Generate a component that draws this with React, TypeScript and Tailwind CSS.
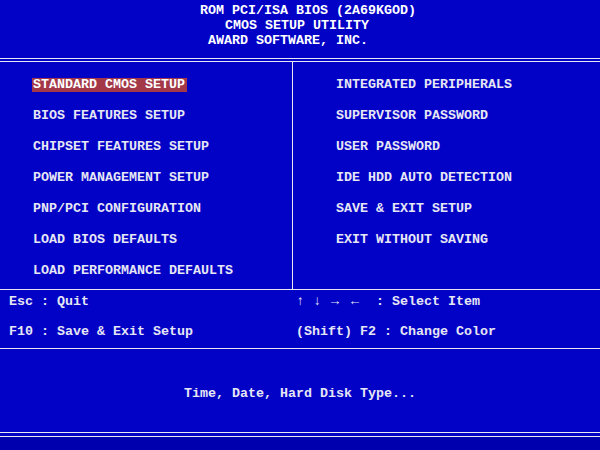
const leftItems = [
  "STANDARD CMOS SETUP",
  "BIOS FEATURES SETUP",
  "CHIPSET FEATURES SETUP",
  "POWER MANAGEMENT SETUP",
  "PNP/PCI CONFIGURATION",
  "LOAD BIOS DEFAULTS",
  "LOAD PERFORMANCE DEFAULTS",
];

const rightItems = [
  "INTEGRATED PERIPHERALS",
  "SUPERVISOR PASSWORD",
  "USER PASSWORD",
  "IDE HDD AUTO DETECTION",
  "SAVE & EXIT SETUP",
  "EXIT WITHOUT SAVING",
];

export default function App() {
  const selected = 0;

  return (
    <div
      className="flex h-[450px] w-[600px] flex-col overflow-hidden bg-[#0202c6] text-[13.33px] font-bold text-[#e6e6f4] whitespace-pre"
      style={{ fontFamily: '"Liberation Mono", "DejaVu Sans Mono", monospace' }}
    >
      {/* header */}
      <div className="flex h-[58px] flex-col pt-[3px] leading-[15px]">
        <div className="pl-[200px] text-white">ROM PCI/ISA BIOS (2A69KGOD)</div>
        <div className="pl-[225px] text-white">CMOS SETUP UTILITY</div>
        <div className="pl-[208px] text-white">AWARD SOFTWARE, INC.</div>
      </div>
      <div className="h-[4px] border-y border-[#e8e8f4]" />

      {/* main menu */}
      <div className="flex h-[228px] border-b border-[#e8e8f4]">
        <div className="w-[293px] border-r border-[#e8e8f4] pt-[7px]">
          {leftItems.map((item, i) => (
            <div key={item} className="flex h-[31px] items-center pl-[32px]">
              <span
                className={`inline-block h-[14px] pl-[1px] pr-[2px] leading-[14px] ${
                  i === selected ? "bg-[#a23848] text-white" : ""
                }`}
              >
                {item}
              </span>
            </div>
          ))}
        </div>
        <div className="flex-1 pt-[7px]">
          {rightItems.map((item) => (
            <div key={item} className="flex h-[31px] items-center pl-[43px]">
              <span className="inline-block h-[14px] leading-[14px]">{item}</span>
            </div>
          ))}
        </div>
      </div>

      {/* key help */}
      <div className="flex h-[59px] flex-col gap-[15px] border-b border-[#e8e8f4] pt-[4px] leading-[15px]">
        <div className="flex">
          <div className="w-[296px] pl-[9px]">Esc : Quit</div>
          <div>
            <span className="inline-block w-[17px]">↑</span>
            <span className="inline-block w-[18px]">↓</span>
            <span className="inline-block w-[20px]">→</span>
            <span className="inline-block w-[25px]">←</span>
            {": Select Item"}
          </div>
        </div>
        <div className="flex">
          <div className="w-[296px] pl-[9px]">F10 : Save &amp; Exit Setup</div>
          <div>(Shift) F2 : Change Color</div>
        </div>
      </div>

      {/* item description */}
      <div className="h-[83px] pt-[37px] text-center leading-[15px]">
        Time, Date, Hard Disk Type...
      </div>
      <div className="h-[5px] border-y border-[#e8e8f4]" />
      <div className="flex-1 bg-[#0000ae]" />
    </div>
  );
}
